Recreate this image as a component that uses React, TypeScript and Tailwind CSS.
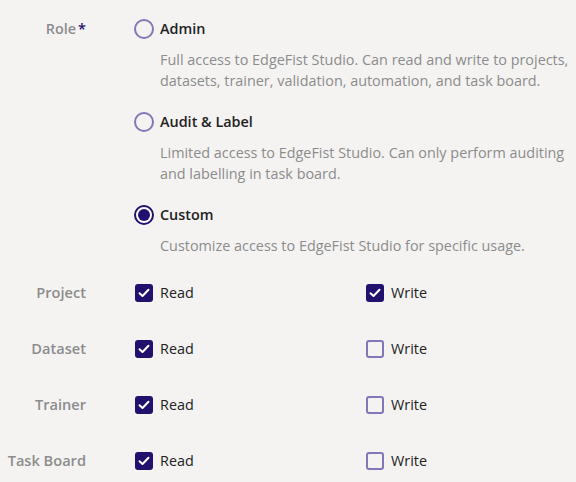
import { useState } from "react";

type Role = "admin" | "audit" | "custom";

const roles: { id: Role; title: string; desc: string }[] = [
  {
    id: "admin",
    title: "Admin",
    desc: "Full access to EdgeFist Studio. Can read and write to projects, datasets, trainer, validation, automation, and task board.",
  },
  {
    id: "audit",
    title: "Audit & Label",
    desc: "Limited access to EdgeFist Studio. Can only perform auditing and labelling in task board.",
  },
  {
    id: "custom",
    title: "Custom",
    desc: "Customize access to EdgeFist Studio for specific usage.",
  },
];

interface Perm {
  name: string;
  read: boolean;
  write: boolean;
}

function Radio({ checked }: { checked: boolean }) {
  return checked ? (
    <span className="w-5 h-5 rounded-full border-2 border-[#22106e] bg-white flex items-center justify-center shrink-0">
      <span className="w-[12px] h-[12px] rounded-full bg-[#22106e]" />
    </span>
  ) : (
    <span className="w-5 h-5 rounded-full border-2 border-[#8476b8] shrink-0" />
  );
}

function Checkbox({ checked }: { checked: boolean }) {
  return (
    <span className="w-5 h-5 flex items-center justify-center shrink-0">
      {checked ? (
        <span className="w-[18px] h-[18px] rounded-[3px] bg-[#22106e] flex items-center justify-center">
          <svg width="12" height="10" viewBox="0 0 12 10" fill="none">
            <path d="M1.5 5.2 4.5 8 10.5 1.8" stroke="white" strokeWidth="2" strokeLinecap="round" strokeLinejoin="round" />
          </svg>
        </span>
      ) : (
        <span className="w-[18px] h-[18px] rounded-[3px] border-2 border-[#8476b8]" />
      )}
    </span>
  );
}

export default function App() {
  const [role, setRole] = useState<Role>("custom");
  const [perms, setPerms] = useState<Perm[]>([
    { name: "Project", read: true, write: true },
    { name: "Dataset", read: true, write: false },
    { name: "Trainer", read: true, write: false },
    { name: "Task Board", read: true, write: false },
  ]);

  function toggle(i: number, key: "read" | "write") {
    setPerms(perms.map((p, j) => (j === i ? { ...p, [key]: !p[key] } : p)));
  }

  return (
    <div className="w-[576px] h-[482px] bg-[#f4f3f2] font-['Open_Sans',sans-serif] text-[14.4px] overflow-hidden pt-[19px]">
      <div className="grid grid-cols-[86px_1fr] gap-x-[48px]">
        <div className="h-5 flex items-center justify-end font-semibold text-[#8c8c8c]">
          Role<span className="text-[#22106e] ml-[2px]">*</span>
        </div>
        <div className="flex flex-col gap-[21px]">
          {roles.map((r) => (
            <div key={r.id} className="cursor-pointer" onClick={() => setRole(r.id)}>
              <div className="h-5 flex items-center gap-[6px]">
                <Radio checked={role === r.id} />
                <span className="font-semibold text-[#222]">{r.title}</span>
              </div>
              <p className="pl-[26px] mt-[10px] leading-[21px] text-[#8c8c8c]">{r.desc}</p>
            </div>
          ))}
        </div>
      </div>

      <div className="mt-[26px] flex flex-col gap-[36px]">
        {perms.map((p, i) => (
          <div key={p.name} className="grid grid-cols-[86px_231px_1fr] gap-x-[48px] h-5 items-center">
            <div className="text-right font-semibold text-[#8c8c8c] text-[14.6px]">{p.name}</div>
            <div className="flex items-center gap-[6px] cursor-pointer" onClick={() => toggle(i, "read")}>
              <Checkbox checked={p.read} />
              <span className="font-medium text-[#222]">Read</span>
            </div>
            <div className="flex items-center gap-[6px] cursor-pointer -ml-[48px]" onClick={() => toggle(i, "write")}>
              <Checkbox checked={p.write} />
              <span className="font-medium text-[#222]">Write</span>
            </div>
          </div>
        ))}
      </div>
    </div>
  );
}
